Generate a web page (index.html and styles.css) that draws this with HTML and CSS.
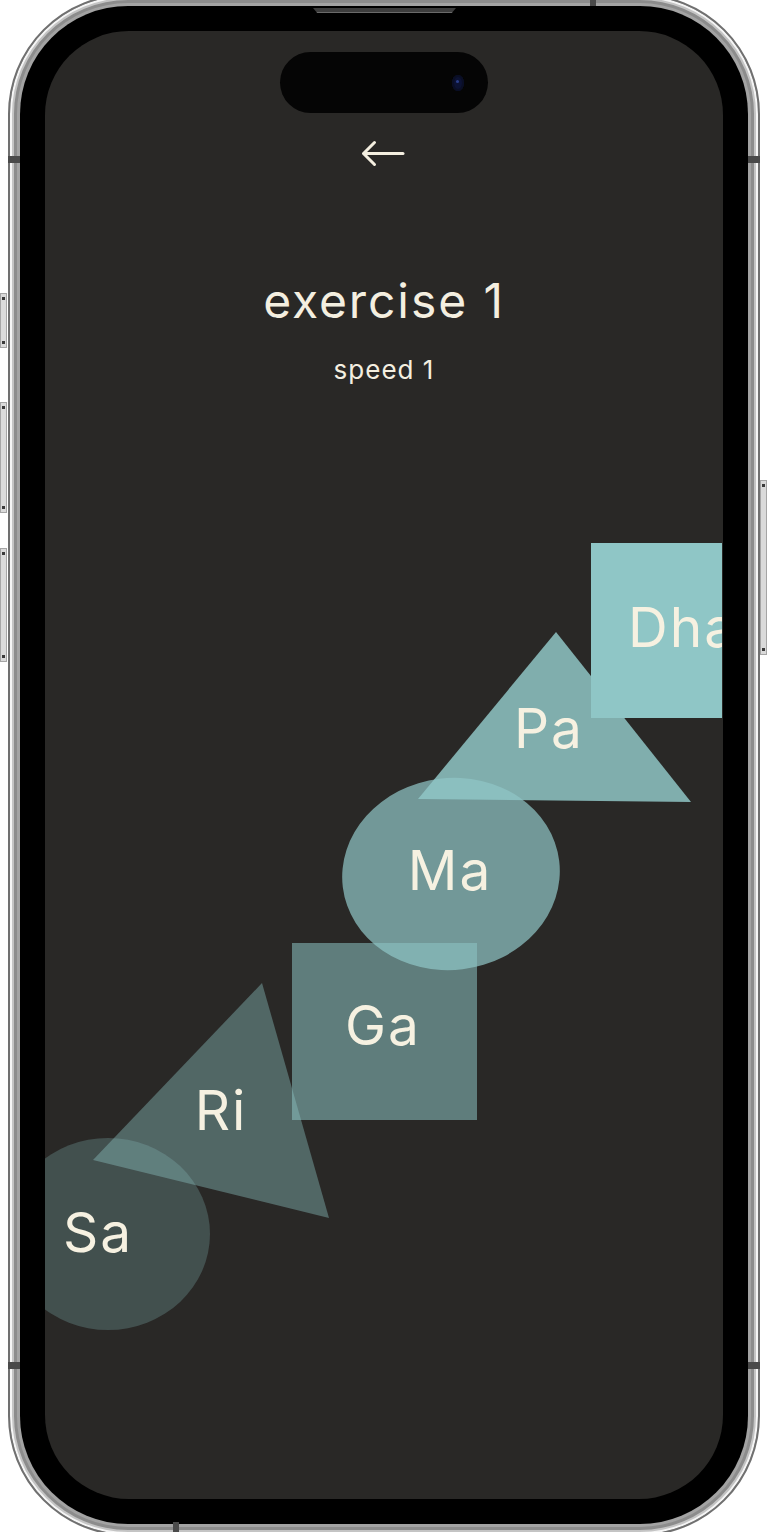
FILE: index.html
```html
<!DOCTYPE html>
<html lang="en">
<head>
    <meta charset="UTF-8">
    <meta name="viewport" content="width=device-width, initial-scale=1.0">
    <title>exercise 1</title>
    <link rel="stylesheet" href="styles.css">
</head>
<body>
    <div class="phone">
        <span class="side-btn left-1"></span>
        <span class="side-btn left-2"></span>
        <span class="side-btn left-3"></span>
        <span class="side-btn right-1"></span>
        <span class="band band-lt"></span>
        <span class="band band-rt"></span>
        <span class="band band-lb"></span>
        <span class="band band-rb"></span>
        <span class="band band-top"></span>
        <span class="band band-bottom"></span>

        <div class="bezel">
            <div class="speaker"></div>
            <div class="screen">
                <div class="island"><span class="camera"></span></div>

                <header class="header">
                    <button class="back" aria-label="back">
                        <svg width="44" height="27" viewBox="0 0 44 27" fill="none" stroke="#f4efe0" stroke-width="3" stroke-linecap="round" stroke-linejoin="round">
                            <path d="M42 13.5H3"/>
                            <path d="M13.5 2.5L2.5 13.5L13.5 24.5"/>
                        </svg>
                    </button>
                    <h1 class="title">exercise 1</h1>
                    <p class="subtitle">speed 1</p>
                </header>

                <!-- notes of the exercise, placed on a free canvas -->
                <div class="stage">
                    <svg class="notes" width="677" height="968" viewBox="0 0 677 968">
                        <ellipse cx="63" cy="702" rx="102" ry="96" class="note" fill-opacity="0.25"/>
                        <polygon points="217,451 48,628 284,686" class="note" fill-opacity="0.4"/>
                        <rect x="247" y="411" width="185" height="177" class="note" fill-opacity="0.54"/>
                        <ellipse cx="406" cy="342" rx="109" ry="96" transform="rotate(-7 406 342)" class="note" fill-opacity="0.71"/>
                        <polygon points="511,100 373,267 646,270" class="note" fill-opacity="0.85"/>
                        <rect x="546" y="11" width="178" height="175" class="note"/>

                        <text x="53" y="720" class="label">Sa</text>
                        <text x="176" y="598" class="label">Ri</text>
                        <text x="338" y="513" class="label">Ga</text>
                        <text x="405" y="358" class="label">Ma</text>
                        <text x="504" y="216" class="label">Pa</text>
                        <text x="583" y="115" class="label label-start">Dha</text>
                    </svg>
                </div>
            </div>
        </div>
    </div>
</body>
</html>
```

FILE: styles.css
```css
* {
    margin: 0;
    padding: 0;
    box-sizing: border-box;
}

body {
    font-family: Inter, "Liberation Sans", sans-serif;
    background-color: #ffffff;
    width: 768px;
    height: 1532px;
    overflow: hidden;
}

.phone {
    position: relative;
    width: 752px;
    height: 1542px;
    margin: -6px 0 0 8px;
    padding: 10px;
    border-radius: 120px;
    border: 2px solid #707070;
    background-color: #a3a3a3;
    box-shadow: inset 0 0 0 2px #f5f5f5, inset 0 0 0 4px #c4c4c4, inset 0 0 0 7px #8c8c8c;
}

.bezel {
    position: relative;
    height: 100%;
    padding: 25px;
    border-radius: 108px;
    background-color: #000;
}

.speaker {
    position: absolute;
    top: 2px;
    left: 293px;
    width: 143px;
    height: 5px;
    background-color: #3d3d3d;
    border-bottom: 1px solid #6a6a6a;
    clip-path: polygon(0 0, 100% 0, 97% 100%, 3% 100%);
}

.screen {
    position: relative;
    height: 100%;
    border-radius: 84px;
    background-color: #292826;
    overflow: hidden;
    display: flex;
    flex-direction: column;
}

.island {
    position: absolute;
    top: 21px;
    left: 235px;
    width: 208px;
    height: 61px;
    border-radius: 31px;
    background-color: #050505;
}

.camera {
    position: absolute;
    top: 23px;
    right: 24px;
    width: 12px;
    height: 16px;
    border-radius: 50%;
    background-color: #0c1233;
    box-shadow: inset 0 0 0 2px #0a0e24;
}

.camera::after {
    content: "";
    position: absolute;
    top: 5px;
    left: 4px;
    width: 3px;
    height: 3px;
    border-radius: 50%;
    background-color: #2a3e8a;
}

.header {
    display: flex;
    flex-direction: column;
    align-items: center;
    color: #f4efe0;
}

.back {
    display: block;
    margin-top: 109px;
    margin-right: 2px;
    background: none;
    border: none;
    cursor: pointer;
}

.back svg {
    display: block;
}

.title {
    margin-top: 106px;
    font-size: 48px;
    line-height: 56px;
    font-weight: 400;
    letter-spacing: 1.9px;
}

.subtitle {
    margin-top: 26px;
    font-size: 26px;
    line-height: 30px;
    letter-spacing: 1px;
}

.stage {
    position: relative;
    margin-top: 147px;
    height: 968px;
}

.notes {
    display: block;
    overflow: hidden;
}

.note {
    fill: #8fc6c6;
}

.label {
    fill: #f6f1e1;
    font-family: Inter, "Liberation Sans", sans-serif;
    font-size: 55px;
    letter-spacing: 2px;
    text-anchor: middle;
}

.label-start {
    text-anchor: start;
}

/* hardware bits on the frame */
.side-btn {
    position: absolute;
    width: 7px;
    background-color: #dadada;
    border: 1px solid #a5a5a5;
}

.side-btn::before,
.side-btn::after {
    content: "";
    position: absolute;
    left: 1px;
    width: 3px;
    height: 3px;
    background-color: #3a3a3a;
}

.side-btn::before {
    top: 3px;
}

.side-btn::after {
    bottom: 3px;
}

.left-1 {
    left: -10px;
    top: 297px;
    height: 55px;
}

.left-2 {
    left: -10px;
    top: 406px;
    height: 111px;
}

.left-3 {
    left: -10px;
    top: 552px;
    height: 114px;
}

.right-1 {
    left: 750px;
    top: 484px;
    height: 175px;
}

.band {
    position: absolute;
    background-color: #4a4a4a;
    z-index: 1;
}

.band-lt,
.band-lb {
    left: -2px;
    width: 12px;
    height: 7px;
}

.band-rt,
.band-rb {
    left: 738px;
    width: 12px;
    height: 7px;
}

.band-lt,
.band-rt {
    top: 160px;
}

.band-lb,
.band-rb {
    top: 1366px;
}

.band-top {
    top: -2px;
    left: 580px;
    width: 6px;
    height: 12px;
}

.band-bottom {
    top: 1526px;
    left: 163px;
    width: 6px;
    height: 12px;
}
```
